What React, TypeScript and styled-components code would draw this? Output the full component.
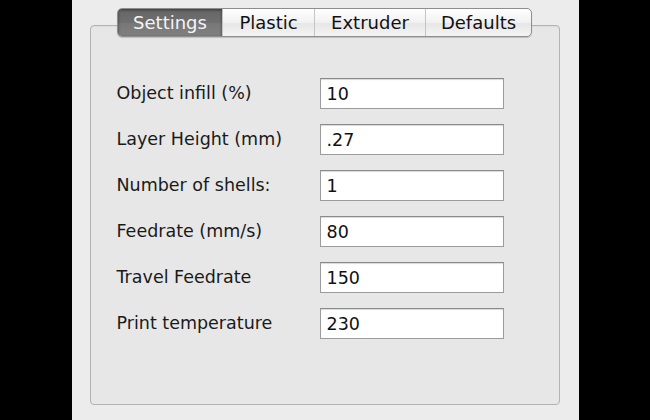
import React from "react";
import styled, { createGlobalStyle } from "styled-components";

const GlobalStyle = createGlobalStyle`
  html, body {
    margin: 0;
    padding: 0;
    background: #000000;
  }
`;

const Screen = styled.div`
  width: 650px;
  height: 420px;
  display: flex;
  justify-content: center;
  background: #000000;
  overflow: hidden;
`;

const Window = styled.div`
  width: 507px;
  height: 420px;
  box-sizing: border-box;
  padding: 8px 19px 0 18px;
  background: #ececec;
  display: flex;
  flex-direction: column;
  align-items: center;
  font-family: "DejaVu Sans", "Liberation Sans", sans-serif;
`;

const TabBar = styled.div`
  position: relative;
  z-index: 1;
  display: flex;
  height: 27px;
  margin-bottom: -12px;
  border: 1px solid #8e8e8e;
  border-radius: 5px;
  overflow: hidden;
  box-shadow: 0 1px 1px rgba(0, 0, 0, 0.18);
  background: linear-gradient(#ffffff, #f1f1f1 50%, #e6e6e6 51%, #f4f4f4);
`;

const Tab = styled.div<{ $active?: boolean; $width: number }>`
  width: ${(p) => p.$width}px;
  display: flex;
  align-items: center;
  justify-content: center;
  font-size: 18px;
  color: ${(p) => (p.$active ? "#f4f4f4" : "#111111")};
  background: ${(p) =>
    p.$active
      ? "linear-gradient(#666666, #6f6f6f 50%, #777777 51%, #808080)"
      : "transparent"};
  box-shadow: ${(p) => (p.$active ? "inset 0 1px 3px rgba(0,0,0,0.45)" : "none")};
  & + & {
    border-left: 1px solid #c4c4c4;
  }
`;

const Panel = styled.div`
  width: 470px;
  height: 380px;
  box-sizing: border-box;
  border: 1px solid #b3b3b3;
  border-radius: 4px;
  background: #e7e7e7;
  box-shadow: inset 0 1px 1px rgba(0, 0, 0, 0.05);
  padding: 52px 0 0 26px;
`;

const Form = styled.div`
  display: grid;
  grid-template-columns: 203px 184px;
  row-gap: 15px;
  align-items: center;
`;

const Label = styled.div`
  font-size: 17.5px;
  color: #1a1a1a;
  margin-top: -2px;
`;

const Field = styled.div`
  height: 31px;
  box-sizing: border-box;
  border: 1px solid #9c9c9c;
  border-top-color: #8a8a8a;
  background: #ffffff;
  box-shadow: inset 0 1px 1px rgba(0, 0, 0, 0.15);
  padding: 0 6px;
  display: flex;
  align-items: center;
  font-size: 17.5px;
  color: #111111;
`;

const tabs = [
  { name: "Settings", width: 104 },
  { name: "Plastic", width: 91 },
  { name: "Extruder", width: 110 },
  { name: "Defaults", width: 105 },
];

const rows = [
  ["Object infill (%)", "10"],
  ["Layer Height (mm)", ".27"],
  ["Number of shells:", "1"],
  ["Feedrate (mm/s)", "80"],
  ["Travel Feedrate", "150"],
  ["Print temperature", "230"],
];

export default function App() {
  return (
    <>
      <GlobalStyle />
      <Screen>
        <Window>
          <TabBar>
            {tabs.map((t, i) => (
              <Tab key={t.name} $active={i === 0} $width={t.width}>
                {t.name}
              </Tab>
            ))}
          </TabBar>
          <Panel>
            <Form>
              {rows.map(([label, value]) => (
                <React.Fragment key={label}>
                  <Label>{label}</Label>
                  <Field>{value}</Field>
                </React.Fragment>
              ))}
            </Form>
          </Panel>
        </Window>
      </Screen>
    </>
  );
}
